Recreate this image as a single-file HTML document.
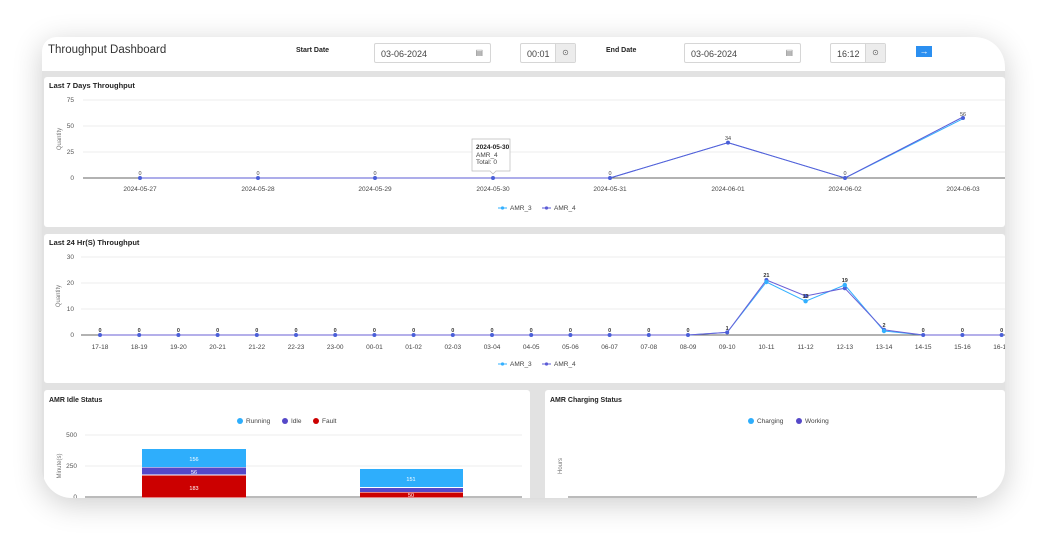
<!DOCTYPE html>
<html><head><meta charset="utf-8"><style>
*{margin:0;padding:0;box-sizing:border-box}
body{width:1043px;height:536px;background:#fff;position:relative;overflow:hidden;font-family:"Liberation Sans",sans-serif}
.frame{position:absolute;left:42px;top:37px;width:963px;height:461px;background:#e2e2e2;border-radius:14px 30px 30px 30px;overflow:hidden;box-shadow:0 6px 30px rgba(0,0,0,.2)}
.hdr{position:absolute;left:0;top:0;width:963px;height:34px;background:#fff}
.card{position:absolute;background:#fff;border-radius:3px}
.t{position:absolute;font-size:8px;font-weight:bold;color:#222}
.inp{position:absolute;height:20px;border:1px solid #d6d6d6;border-radius:2px;background:#fff;font-size:9px;color:#444;padding:5px 6px}
.ib{position:absolute;top:0;right:0;width:20px;height:18px;background:#ececec;border-left:1px solid #d6d6d6;font-size:8px;color:#666;text-align:center;line-height:18px}
svg{position:absolute;left:0;top:0}
</style></head><body>
<div class="frame">
<div class="hdr">
<div style="position:absolute;left:6px;top:7px;font-size:11.5px;color:#333">Throughput Dashboard</div>
<div class="t" style="left:254px;top:10px;font-size:7px">Start Date</div>
<div class="inp" style="left:332px;top:6px;width:117px">03-06-2024<span style="position:absolute;right:7px;top:4px;font-size:8px;color:#777">▤</span></div>
<div class="inp" style="left:478px;top:6px;width:56px">00:01<div class="ib">⊙</div></div>
<div class="t" style="left:564px;top:10px;font-size:7px">End Date</div>
<div class="inp" style="left:642px;top:6px;width:117px">03-06-2024<span style="position:absolute;right:7px;top:4px;font-size:8px;color:#777">▤</span></div>
<div class="inp" style="left:788px;top:6px;width:56px">16:12<div class="ib">⊙</div></div>
<div style="position:absolute;left:874px;top:9px;width:16px;height:11px;background:#2b8ff0;color:#fff;font-size:9px;text-align:center;line-height:10px">→</div>
</div>
<div class="card" style="left:2px;top:40px;width:961px;height:150px"></div>
<div class="card" style="left:2px;top:197px;width:961px;height:149px"></div>
<div class="card" style="left:2px;top:353px;width:486px;height:120px"></div>
<div class="card" style="left:503px;top:353px;width:460px;height:120px"></div>
</div>
<svg width="1043" height="536" font-family="Liberation Sans, sans-serif">
<defs><clipPath id="c"><rect x="42" y="37" width="963" height="461" rx="30"/></clipPath></defs>
<g clip-path="url(#c)">
<text x="49" y="88" font-size="7.5" font-weight="bold" fill="#222">Last 7 Days Throughput</text>
<g stroke="#eee" stroke-width="1"><line x1="83" y1="100" x2="1005" y2="100"/><line x1="83" y1="126" x2="1005" y2="126"/><line x1="83" y1="152" x2="1005" y2="152"/></g>
<line x1="83" y1="178" x2="1005" y2="178" stroke="#666"/>
<g font-size="6.5" fill="#555" text-anchor="end"><text x="74" y="102">75</text><text x="74" y="128">50</text><text x="74" y="154">25</text><text x="74" y="180">0</text></g>
<text transform="translate(61,139) rotate(-90)" font-size="6" fill="#777" text-anchor="middle">Quantity</text>
<g font-size="6.5" fill="#444" text-anchor="middle"><text x="140" y="191">2024-05-27</text><text x="258" y="191">2024-05-28</text><text x="375" y="191">2024-05-29</text><text x="493" y="191">2024-05-30</text><text x="610" y="191">2024-05-31</text><text x="728" y="191">2024-06-01</text><text x="845" y="191">2024-06-02</text><text x="963" y="191">2024-06-03</text></g>
<polyline fill="none" stroke="#33b0ff" stroke-width="1" points="140,178 258,178 375,178 493,178 610,178 728,142.6 845,178 963,118.7"/>
<polyline fill="none" stroke="#5b5bd6" stroke-width="1" points="140,178 258,178 375,178 493,178 610,178 728,142.6 845,178 963,117"/>
<g fill="#4a5fd8"><circle cx="140" cy="178" r="2"/><circle cx="258" cy="178" r="2"/><circle cx="375" cy="178" r="2"/><circle cx="493" cy="178" r="2"/><circle cx="610" cy="178" r="2"/><circle cx="728" cy="142.6" r="2"/><circle cx="845" cy="178" r="2"/><circle cx="963" cy="118" r="2"/></g>
<g font-size="5.5" fill="#444" text-anchor="middle"><text x="140" y="175">0</text><text x="258" y="175">0</text><text x="375" y="175">0</text><text x="610" y="175">0</text><text x="728" y="140">34</text><text x="845" y="175">0</text><text x="963" y="116">56</text></g>
<path d="M472 139h38v32h-14l-3 3-3-3h-18z" fill="#fff" stroke="#bbb" stroke-width=".7"/>
<text x="476" y="149" font-size="6.5" font-weight="bold" fill="#222">2024-05-30</text>
<text x="476" y="157" font-size="6.5" fill="#444">AMR_4</text>
<text x="476" y="164" font-size="6.5" fill="#444">Total: 0</text>
<line x1="498" y1="208" x2="507" y2="208" stroke="#33b0ff"/><circle cx="502.5" cy="208" r="1.6" fill="#33b0ff"/><text x="510" y="210" font-size="6.5" fill="#444">AMR_3</text>
<line x1="542" y1="208" x2="551" y2="208" stroke="#5b5bd6"/><circle cx="546.5" cy="208" r="1.6" fill="#5b5bd6"/><text x="554" y="210" font-size="6.5" fill="#444">AMR_4</text>

<text x="49" y="245" font-size="7.5" font-weight="bold" fill="#222">Last 24 Hr(S) Throughput</text>
<g stroke="#eee"><line x1="81" y1="257" x2="1005" y2="257"/><line x1="81" y1="283" x2="1005" y2="283"/><line x1="81" y1="309" x2="1005" y2="309"/></g>
<line x1="81" y1="335" x2="1005" y2="335" stroke="#666"/>
<g font-size="6.5" fill="#555" text-anchor="end"><text x="74" y="259">30</text><text x="74" y="285">20</text><text x="74" y="311">10</text><text x="74" y="337">0</text></g>
<text transform="translate(60,296) rotate(-90)" font-size="6" fill="#777" text-anchor="middle">Quantity</text>
<g font-size="6.5" fill="#444" text-anchor="middle"><text x="100" y="349">17-18</text><text x="139.2" y="349">18-19</text><text x="178.4" y="349">19-20</text><text x="217.6" y="349">20-21</text><text x="256.8" y="349">21-22</text><text x="296" y="349">22-23</text><text x="335.2" y="349">23-00</text><text x="374.4" y="349">00-01</text><text x="413.6" y="349">01-02</text><text x="452.8" y="349">02-03</text><text x="492" y="349">03-04</text><text x="531.2" y="349">04-05</text><text x="570.4" y="349">05-06</text><text x="609.6" y="349">06-07</text><text x="648.8" y="349">07-08</text><text x="688" y="349">08-09</text><text x="727.2" y="349">09-10</text><text x="766.4" y="349">10-11</text><text x="805.6" y="349">11-12</text><text x="844.8" y="349">12-13</text><text x="884" y="349">13-14</text><text x="923.2" y="349">14-15</text><text x="962.4" y="349">15-16</text><text x="1001.6" y="349">16-17</text></g>
<polyline fill="none" stroke="#33b0ff" points="100,335 688,335 727.2,332.4 766.4,282 805.6,301.2 844.8,285 884,331 923.2,335 1002,335"/>
<polyline fill="none" stroke="#6a5fd6" points="100,335 688,335 727.2,332.4 766.4,280 805.6,296 844.8,288.2 884,329.8 923.2,335 1002,335"/>
<g fill="#4a5fd8"><circle cx="100" cy="335" r="2"/><circle cx="139.2" cy="335" r="2"/><circle cx="178.4" cy="335" r="2"/><circle cx="217.6" cy="335" r="2"/><circle cx="256.8" cy="335" r="2"/><circle cx="296" cy="335" r="2"/><circle cx="335.2" cy="335" r="2"/><circle cx="374.4" cy="335" r="2"/><circle cx="413.6" cy="335" r="2"/><circle cx="452.8" cy="335" r="2"/><circle cx="492" cy="335" r="2"/><circle cx="531.2" cy="335" r="2"/><circle cx="570.4" cy="335" r="2"/><circle cx="609.6" cy="335" r="2"/><circle cx="648.8" cy="335" r="2"/><circle cx="688" cy="335" r="2"/><circle cx="727.2" cy="332.4" r="2"/><circle cx="884" cy="329.8" r="2"/><circle cx="923.2" cy="335" r="2"/><circle cx="962.4" cy="335" r="2"/><circle cx="1001.6" cy="335" r="2"/><circle cx="766.4" cy="280" r="2"/><circle cx="805.6" cy="296" r="2"/><circle cx="844.8" cy="288.2" r="2"/></g>
<g fill="#33b0ff"><circle cx="766.4" cy="282" r="2.2"/><circle cx="805.6" cy="301.2" r="2.2"/><circle cx="844.8" cy="285" r="2.2"/><circle cx="884" cy="331" r="2.2"/></g>
<g font-size="5.5" font-weight="bold" fill="#333" text-anchor="middle"><text x="100" y="332">0</text><text x="139.2" y="332">0</text><text x="178.4" y="332">0</text><text x="217.6" y="332">0</text><text x="256.8" y="332">0</text><text x="296" y="332">0</text><text x="335.2" y="332">0</text><text x="374.4" y="332">0</text><text x="413.6" y="332">0</text><text x="452.8" y="332">0</text><text x="492" y="332">0</text><text x="531.2" y="332">0</text><text x="570.4" y="332">0</text><text x="609.6" y="332">0</text><text x="648.8" y="332">0</text><text x="688" y="332">0</text><text x="727.2" y="330">1</text><text x="766.4" y="277">21</text><text x="805.6" y="298">13</text><text x="844.8" y="282">19</text><text x="884" y="327">2</text><text x="923.2" y="332">0</text><text x="962.4" y="332">0</text><text x="1001.6" y="332">0</text></g>
<line x1="498" y1="364" x2="507" y2="364" stroke="#33b0ff"/><circle cx="502.5" cy="364" r="1.6" fill="#33b0ff"/><text x="510" y="366" font-size="6.5" fill="#444">AMR_3</text>
<line x1="542" y1="364" x2="551" y2="364" stroke="#5b5bd6"/><circle cx="546.5" cy="364" r="1.6" fill="#5b5bd6"/><text x="554" y="366" font-size="6.5" fill="#444">AMR_4</text>

<text x="49" y="402" font-size="7" font-weight="bold" fill="#222">AMR Idle Status</text>
<circle cx="240" cy="421" r="3" fill="#2eaefc"/><text x="246" y="423" font-size="6.5" fill="#444">Running</text>
<circle cx="285" cy="421" r="3" fill="#5548c8"/><text x="291" y="423" font-size="6.5" fill="#444">Idle</text>
<circle cx="316" cy="421" r="3" fill="#cc0000"/><text x="322" y="423" font-size="6.5" fill="#444">Fault</text>
<g stroke="#eee"><line x1="85" y1="435" x2="522" y2="435"/><line x1="85" y1="466" x2="522" y2="466"/></g>
<line x1="85" y1="497" x2="522" y2="497" stroke="#777"/>
<g font-size="6.5" fill="#555" text-anchor="end"><text x="77" y="437">500</text><text x="77" y="468">250</text><text x="77" y="499">0</text></g>
<text transform="translate(61,466) rotate(-90)" font-size="6" fill="#777" text-anchor="middle">Minute(s)</text>
<rect x="142" y="449" width="104" height="18" fill="#2eaefc"/><rect x="142" y="467.5" width="104" height="7" fill="#5548c8"/><rect x="142" y="475.5" width="104" height="22" fill="#cc0000"/>
<rect x="360" y="469" width="103" height="18" fill="#2eaefc"/><rect x="360" y="488" width="103" height="4" fill="#5548c8"/><rect x="360" y="492.5" width="103" height="5" fill="#cc0000"/>
<g font-size="5.5" fill="#fff" text-anchor="middle"><text x="194" y="461">156</text><text x="194" y="474">56</text><text x="194" y="490">183</text><text x="411" y="481">151</text><text x="411" y="497">50</text></g>

<text x="550" y="402" font-size="7" font-weight="bold" fill="#222">AMR Charging Status</text>
<circle cx="751" cy="421" r="3" fill="#2eaefc"/><text x="757" y="423" font-size="6.5" fill="#444">Charging</text>
<circle cx="799" cy="421" r="3" fill="#5548c8"/><text x="805" y="423" font-size="6.5" fill="#444">Working</text>
<text transform="translate(562,466) rotate(-90)" font-size="6" fill="#777" text-anchor="middle">Hours</text>
<line x1="568" y1="497" x2="977" y2="497" stroke="#777"/>
</g>
</svg>
</body></html>
